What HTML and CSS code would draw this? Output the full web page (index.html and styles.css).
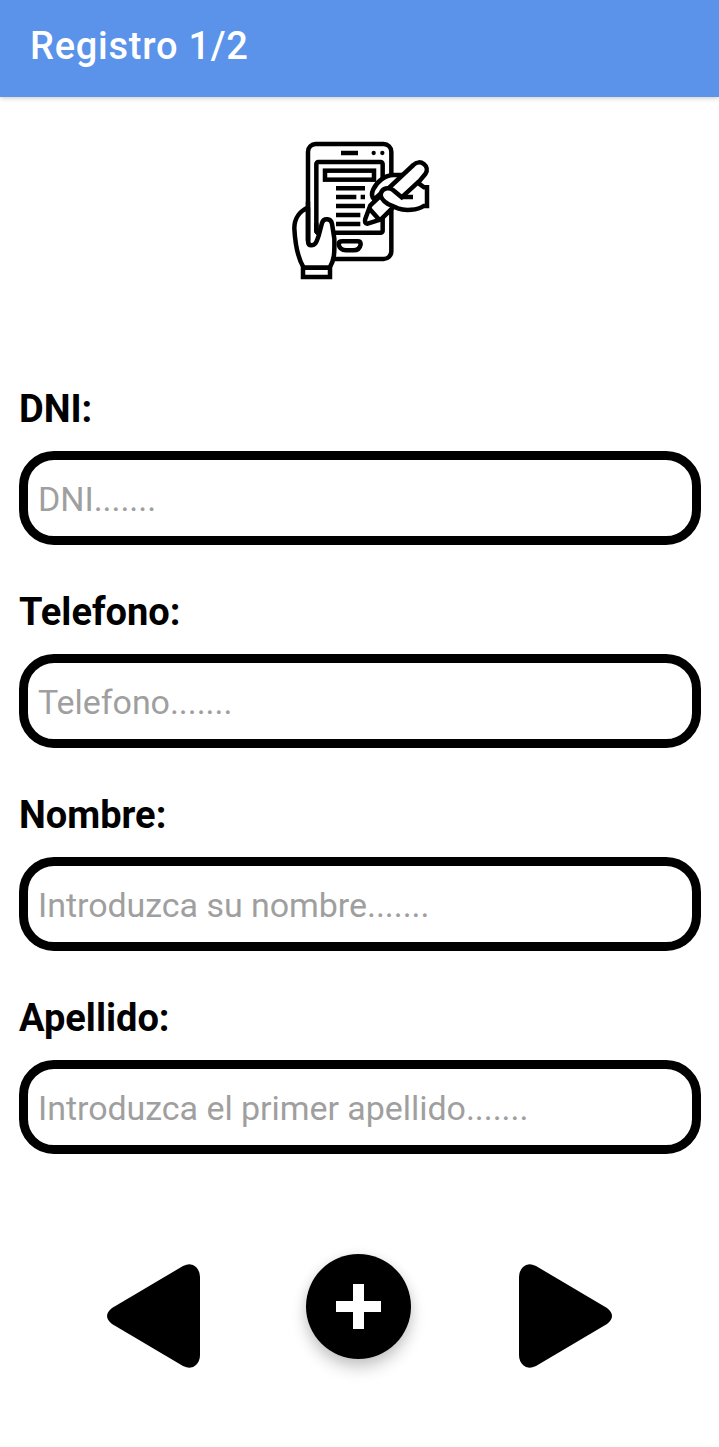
FILE: index.html
```html
<!DOCTYPE html>
<html lang="es">
<head>
<meta charset="utf-8">
<title>Registro 1/2</title>
<link rel="stylesheet" href="styles.css">
</head>
<body>
<header class="toolbar"><h1 class="toolbar-title">Registro 1/2</h1></header>
<main class="content">
  <svg class="form-icon" viewBox="0 0 450 450" fill="#fff" stroke="#000" stroke-width="13.5" stroke-linejoin="round">
    <rect x="69" y="27" width="250" height="345" rx="23"/>
    <path d="M168 54H219" fill="none"/>
    <circle cx="266" cy="54" r="6.5" fill="#000" stroke="none"/>
    <circle cx="292" cy="54" r="6.5" fill="#000" stroke="none"/>
    <rect x="94" y="81" width="199" height="212" rx="6"/>
    <rect x="120" y="107" width="147" height="27" stroke-linejoin="miter"/>
    <path d="M153 160H240M153 186H214M227 186H240M153 213H240M153 240H226M153 267H226" fill="none"/>
    <path d="M172 319H218Q227 319 227 328Q224 346 205 346H183Q164 345 161 328Q161 319 172 319Z"/>
    <path d="M69 218C47 227 28 248 28 280C30 318 37 367 56 398H134C151 370 148 344 148 311L141 266C138 250 116 248 111 264L101 302C94 324 90 331 79 331Q69 331 69 317Z"/>
    <path d="M69 200V317" fill="none"/>
    <path d="M94 265V287Q94 292 103 296" fill="none"/>
    <path d="M54 398H135V426H54Z" stroke-linejoin="miter"/>
    <path d="M355 120H326C299 121 276 140 265 163Q256 181 267 193L289 174L325 158Z"/>
    <path d="M385 90C405 69 437 94 421 117L400 142L288 253L248 266Q237 267 241 251L256 211Z"/>
    <path d="M254 222L284 256" fill="none"/>
    <path d="M398 143L417 157H426V213H416C398 226 359 228 339 220L309 207C292 196 284 186 288 174C293 160 310 155 324 165L350 187Z" stroke-linejoin="miter"/>
    <path d="M348 186H384" fill="none"/>
  </svg>
  <form class="fields">
    <label class="field"><span class="label">DNI:</span><input class="input" type="text" placeholder="DNI......."></label>
    <label class="field"><span class="label">Telefono:</span><input class="input" type="text" placeholder="Telefono......."></label>
    <label class="field"><span class="label">Nombre:</span><input class="input" type="text" placeholder="Introduzca su nombre......."></label>
    <label class="field"><span class="label">Apellido:</span><input class="input" type="text" placeholder="Introduzca el primer apellido......."></label>
  </form>
  <nav class="actions">
    <button class="arrow" aria-label="Anterior"><svg class="arrow-shape" viewBox="0 0 93 104"><path d="M5 44L76 2Q84 -2 89 3Q93 7 93 13V91Q93 97 89 101Q84 106 76 102L5 60Q-5 52 5 44Z"/></svg></button>
    <button class="add" aria-label="Añadir"><svg class="plus" viewBox="0 0 45 45"><path d="M17 0H28V17H45V28H28V45H17V28H0V17H17Z"/></svg></button>
    <button class="arrow" aria-label="Siguiente"><svg class="arrow-shape next" viewBox="0 0 93 104"><path d="M5 44L76 2Q84 -2 89 3Q93 7 93 13V91Q93 97 89 101Q84 106 76 102L5 60Q-5 52 5 44Z"/></svg></button>
  </nav>
</main>
</body>
</html>
```
FILE: styles.css
```css
* { box-sizing: border-box; }
body { margin: 0; min-height: 1447px; background: #fff; color: #000; font-family: Roboto, sans-serif; }
.toolbar { height: 97px; padding: 23px 30px 0; background: #5a93e9; box-shadow: 0 1px 5px rgba(0,0,0,.22); }
.toolbar-title { margin: 0; font-size: 38px; line-height: 46px; font-weight: 500; letter-spacing: .75px; color: #fff; }
.content { display: flex; flex-direction: column; padding: 38px 18px 0 19px; }
.form-icon { width: 150px; height: 150px; margin-left: 266px; }
.fields { display: flex; flex-direction: column; gap: 44px; margin-top: 101px; }
.field { display: flex; flex-direction: column; gap: 19px; }
.label { font-size: 38px; line-height: 46px; font-weight: 700; }
.input { width: 100%; height: 94px; padding: 2px 10px 0; border: 9px solid #000; border-radius: 35px; background: #fff; font-family: inherit; font-size: 34px; letter-spacing: -.05px; outline: 0; }
.input::placeholder { color: #9f9f9f; opacity: 1; }
.actions { display: flex; align-items: flex-start; margin: 100px 0 0 88px; }
button { display: block; padding: 0; border: 0; background: none; }
.arrow { margin-top: 10px; }
.arrow-shape { display: block; width: 93px; height: 104px; }
.next { transform: scaleX(-1); }
.add { display: flex; align-items: center; justify-content: center; width: 105px; height: 105px; margin: 0 108px 0 106px; border-radius: 50%; background: #000; box-shadow: 0 9px 16px rgba(0,0,0,.2), 0 1px 12px rgba(0,0,0,.08); }
.plus { width: 45px; height: 45px; fill: #fff; }
```
